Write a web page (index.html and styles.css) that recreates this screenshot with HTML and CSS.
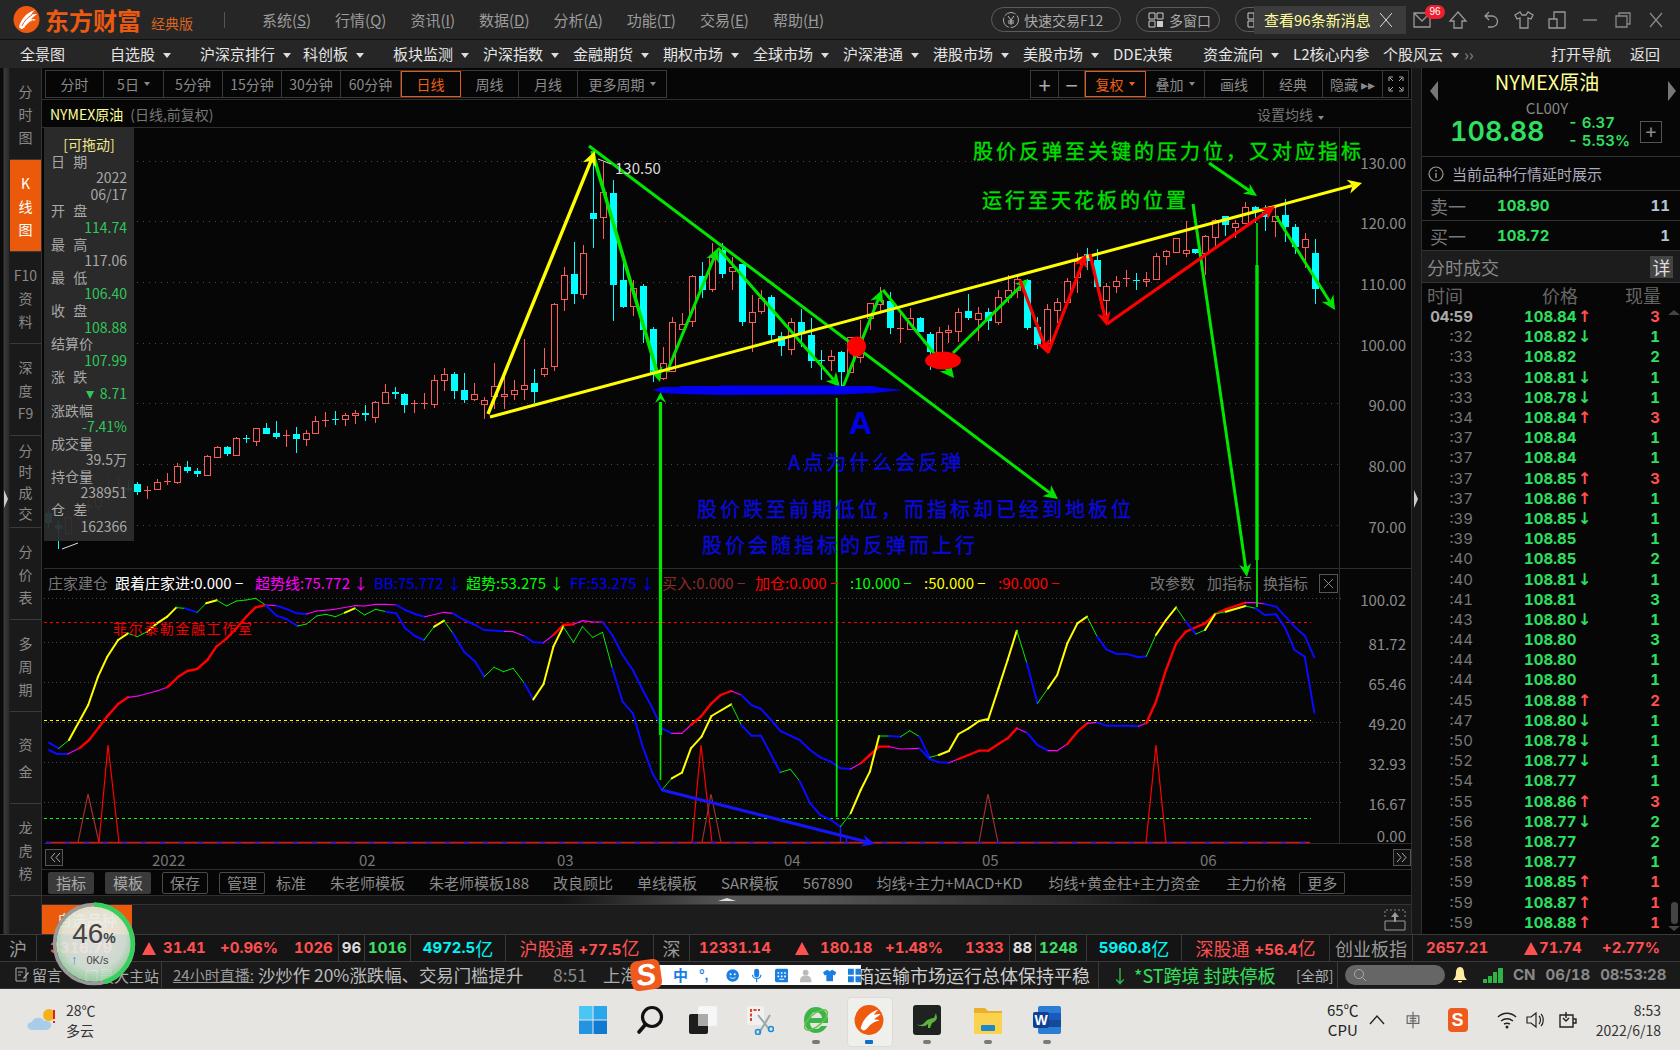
FILE: index.html
```html
<!DOCTYPE html>
<html lang="zh-CN">
<head>
<meta charset="utf-8">
<title>东方财富 经典版</title>
<link rel="stylesheet" href="styles.css">
</head>
<body>
<div class="app">
  <header class="titlebar">
    <div class="brand">
      <svg class="logo" viewBox="0 0 27 27"><ellipse cx="13.5" cy="13.5" rx="13" ry="13.5" fill="#ee5a0f"/><path d="M6 21C8 13 13 7 22 4c-2 2-3 3-4 5 2-1 4-1 6-1-2 2-4 3-6 5 2 0 4 0 5 1-5 1-8 3-11 7-2 2-4 3-6 0z" fill="#fff"/><path d="M9 20c2-5 6-9 10-11M12 21c2-3 5-5 8-7" stroke="#ee5a0f" fill="none"/></svg>
      <span class="brand-name">东方财富</span>
      <span class="brand-sub">经典版</span>
    </div>
    <i class="title-sep"></i>
    <div class="menu">
      <span>系统(<u>S</u>)</span><span>行情(<u>Q</u>)</span><span>资讯(<u>I</u>)</span><span>数据(<u>D</u>)</span><span>分析(<u>A</u>)</span><span>功能(<u>T</u>)</span><span>交易(<u>E</u>)</span><span>帮助(<u>H</u>)</span>
    </div>
    <div class="pills">
      <span class="pill pill-trade"><svg class="pill-ico" viewBox="0 0 18 18"><circle cx="9" cy="9" r="7.5" fill="none" stroke="#aaa" stroke-dasharray="12 2"/><path d="M6 5l3 4 3-4M9 9v5M6 10h6M6 12h6" stroke="#bbb" fill="none"/></svg>快速交易F12</span>
      <span class="pill pill-win"><svg class="pill-ico" viewBox="0 0 18 18"><path d="M2 2h6v6H2zM10 2h6v6h-6zM2 10h6v6H2z" fill="none" stroke="#ccc"/><path d="M10 10h6v6h-6z" fill="#ccc"/></svg>多窗口</span>
      <span class="pill pill-hidden"><svg class="pill-ico" viewBox="0 0 18 18"><path d="M2 2h6v6H2zM2 10h6v6H2z" fill="none" stroke="#ccc"/></svg></span>
    </div>
    <div class="winbtns">
      <span class="slot slot-mail"><svg class="ico" viewBox="0 0 20 20"><path d="M2 3h16v14H2zM2 3l8 8 8-8" fill="none" stroke="#999" stroke-width="1.3"/></svg></span>
      <span class="slot"><svg class="ico" viewBox="0 0 20 20"><path d="M10 2l8 9h-4v7H6v-7H2z" fill="none" stroke="#999" stroke-width="1.3"/></svg></span>
      <span class="slot"><svg class="ico" viewBox="0 0 20 20"><path d="M8 2L4 6l4 4M4 6h7a5 5 0 0 1 0 11H7" fill="none" stroke="#999" stroke-width="1.3"/></svg></span>
      <span class="slot"><svg class="ico" viewBox="0 0 20 20"><path d="M6 2L1 5l2 4 3-1v10h8V8l3 1 2-4-5-3-2 3H8z" fill="none" stroke="#999" stroke-width="1.3"/></svg></span>
      <span class="slot"><svg class="ico" viewBox="0 0 20 20"><path d="M7 9V2h11v16H7M2 9h8v9H2z" fill="none" stroke="#999" stroke-width="1.3"/></svg></span>
      <span class="slot"><svg class="ico" viewBox="0 0 20 20"><path d="M3 10h14" stroke="#888" stroke-width="1.4"/></svg></span>
      <span class="slot"><svg class="ico" viewBox="0 0 20 20"><path d="M3 6h11v11H3zM6 6V3h11v11h-3" fill="none" stroke="#888" stroke-width="1.3"/></svg></span>
      <span class="slot"><svg class="ico" viewBox="0 0 20 20"><path d="M4 3l12 14M16 3L4 17" stroke="#888" stroke-width="1.3"/></svg></span>
    </div>
    <div class="notice">查看96条新消息<svg class="notice-x" viewBox="0 0 14 16"><path d="M1 1l12 14M13 1L1 15" stroke="#ddd" fill="none"/></svg></div>
    <span class="badge">96</span>
  </header>

  <nav class="navbar">
    <span class="nav-item">全景图</span>
    <span class="nav-item caret">自选股</span>
    <span class="nav-item nav-wide caret">沪深京排行</span>
    <span class="nav-item caret">科创板</span>
    <span class="nav-item caret">板块监测</span>
    <span class="nav-item caret">沪深指数</span>
    <span class="nav-item caret">金融期货</span>
    <span class="nav-item caret">期权市场</span>
    <span class="nav-item caret">全球市场</span>
    <span class="nav-item caret">沪深港通</span>
    <span class="nav-item caret">港股市场</span>
    <span class="nav-item caret">美股市场</span>
    <span class="nav-item">DDE决策</span>
    <span class="nav-item caret">资金流向</span>
    <span class="nav-item">L2核心内参</span>
    <span class="nav-item nav-last caret">个股风云</span>
    <span class="nav-more">››</span>
    <span class="nav-right">打开导航</span>
    <span class="nav-right">返回</span>
  </nav>

  <div class="workspace">
    <div class="rail-left"><i class="rail-arrow"></i></div>
    <aside class="tabs">
      <div class="tab"><span>分</span><span>时</span><span>图</span></div>
      <div class="tab tab-on"><span>K</span><span>线</span><span>图</span></div>
      <div class="tab"><span>F10</span><span>资</span><span>料</span></div>
      <div class="tab"><span>深</span><span>度</span><span>F9</span></div>
      <div class="tab tab-tight"><span>分</span><span>时</span><span>成</span><span>交</span></div>
      <div class="tab"><span>分</span><span>价</span><span>表</span></div>
      <div class="tab"><span>多</span><span>周</span><span>期</span></div>
      <div class="tab tab-wide"><span>资</span><span>金</span></div>
      <div class="tab"><span>龙</span><span>虎</span><span>榜</span></div>
    </aside>

    <main class="center">
      <div class="toolbar">
        <div class="periods">
          <span class="btn">分时</span>
          <span class="btn">5日<b class="tri"></b></span>
          <span class="btn">5分钟</span>
          <span class="btn">15分钟</span>
          <span class="btn">30分钟</span>
          <span class="btn">60分钟</span>
          <span class="btn btn-on">日线</span>
          <span class="btn">周线</span>
          <span class="btn">月线</span>
          <span class="btn">更多周期<b class="tri"></b></span>
        </div>
        <div class="tools">
          <span class="btn btn-sym">+</span>
          <span class="btn btn-sym">−</span>
          <span class="btn btn-on">复权<b class="tri tri-on"></b></span>
          <span class="btn">叠加<b class="tri"></b></span>
          <span class="btn">画线</span>
          <span class="btn">经典</span>
          <span class="btn">隐藏 ▸▸</span>
          <span class="btn"><svg class="full-ico" viewBox="0 0 16 16"><path d="M1 5V1h4M11 1h4v4M15 11v4h-4M5 15H1v-4M2 2l3 3M14 2l-3 3M14 14l-3-3M2 14l3-3" fill="none" stroke="#aaa"/></svg></span>
        </div>
      </div>
      <div class="symbol">
        <span class="sym-name">NYMEX原油</span>
        <span class="sym-desc">(日线,前复权)</span>
        <span class="sym-set">设置均线<b class="tri"></b></span>
      </div>

      <div class="stage">
        <svg id="chart" class="chart" viewBox="44 128 1368 741" width="1368" height="741">
          <g id="plot"></g>
          <g class="axis-text">
            <text x="1406" y="169">130.00</text>
            <text x="1406" y="229">120.00</text>
            <text x="1406" y="290">110.00</text>
            <text x="1406" y="351">100.00</text>
            <text x="1406" y="411">90.00</text>
            <text x="1406" y="472">80.00</text>
            <text x="1406" y="533">70.00</text>
            <text x="1406" y="606">100.02</text>
            <text x="1406" y="650">81.72</text>
            <text x="1406" y="690">65.46</text>
            <text x="1406" y="730">49.20</text>
            <text x="1406" y="770">32.93</text>
            <text x="1406" y="810">16.67</text>
            <text x="1406" y="842">0.00</text>
          </g>
          <text class="hi-label" x="615" y="174">130.50</text>
          <g class="note note-green">
            <text x="973" y="159">股价反弹至关键的压力位，又对应指标</text>
            <text x="982" y="208">运行至天花板的位置</text>
          </g>
          <g class="note note-blue">
            <text x="788" y="470">A点为什么会反弹</text>
            <text x="697" y="517">股价跌至前期低位，而指标却已经到地板位</text>
            <text x="702" y="553">股价会随指标的反弹而上行</text>
          </g>
          <text class="big-a" x="849" y="434">A</text>
          <text class="studio" x="113" y="634">菲尔泰勒金融工作室</text>
          <g class="ind-head">
            <text x="48" y="589" fill="#777">庄家建仓</text>
            <text x="115" y="589" fill="#fff">跟着庄家进:0.000 −</text>
            <text x="255" y="589" fill="#ff00ff">超势线:75.772 ↓</text>
            <text x="374" y="589" fill="#0000ff">BB:75.772 ↓</text>
            <text x="466" y="589" fill="#00ff00">超势:53.275 ↓</text>
            <text x="570" y="589" fill="#0000ff">FF:53.275 ↓</text>
            <text x="662" y="589" fill="#8c2a2a">买入:0.000 −</text>
            <text x="755" y="589" fill="#ff0000">加仓:0.000 −</text>
            <text x="850" y="589" fill="#00ff00">:10.000 −</text>
            <text x="924" y="589" fill="#ffff00">:50.000 −</text>
            <text x="998" y="589" fill="#ff0000">:90.000 −</text>
            <text x="1150" y="589" fill="#777">改参数</text>
            <text x="1207" y="589" fill="#777">加指标</text>
            <text x="1263" y="589" fill="#777">换指标</text>
          </g>
          <g class="time-axis">
            <text x="152" y="866" fill="#fff">2022</text>
            <text x="359" y="866">02</text>
            <text x="557" y="866">03</text>
            <text x="784" y="866">04</text>
            <text x="982" y="866">05</text>
            <text x="1200" y="866">06</text>
          </g>
        </svg>
        <div class="datawin">
          <div class="dw-title">[可拖动]</div>
          <div class="dw-label">日 期</div><div class="dw-val">2022</div><div class="dw-val">06/17</div>
          <div class="dw-label">开 盘</div><div class="dw-val dw-g">114.74</div>
          <div class="dw-label">最 高</div><div class="dw-val">117.06</div>
          <div class="dw-label">最 低</div><div class="dw-val dw-g">106.40</div>
          <div class="dw-label">收 盘</div><div class="dw-val dw-g">108.88</div>
          <div class="dw-label">结算价</div><div class="dw-val dw-g">107.99</div>
          <div class="dw-label">涨 跌</div><div class="dw-val dw-g"><span class="dw-tri"></span>8.71</div>
          <div class="dw-label">涨跌幅</div><div class="dw-val dw-g">-7.41%</div>
          <div class="dw-label">成交量</div><div class="dw-val">39.5万</div>
          <div class="dw-label">持仓量</div><div class="dw-val">238951</div>
          <div class="dw-label">仓 差</div><div class="dw-val">162366</div>
        </div>
      </div>

      <div class="templates">
        <span class="tpl tpl-fill">指标</span>
        <span class="tpl tpl-fill">模板</span>
        <span class="tpl tpl-line">保存</span>
        <span class="tpl tpl-line">管理</span>
        <span class="tpl-text">标准</span>
        <span class="tpl-text">朱老师模板</span>
        <span class="tpl-text">朱老师模板188</span>
        <span class="tpl-text">改良顾比</span>
        <span class="tpl-text">单线模板</span>
        <span class="tpl-text">SAR模板</span>
        <span class="tpl-text">567890</span>
        <span class="tpl-text tpl-gap">均线+主力+MACD+KD</span>
        <span class="tpl-text tpl-gap">均线+黄金柱+主力资金</span>
        <span class="tpl-text tpl-end">主力价格</span>
        <span class="tpl tpl-line">更多</span>
      </div>
      <div class="strip"><i class="strip-up"></i></div>
      <div class="dock">
        <span class="dock-tab">自选品种</span>
        <svg class="dock-ico" viewBox="0 0 22 22"><path d="M1 8V1h20v7" fill="none" stroke="#888" stroke-dasharray="2 2"/><path d="M1 12h20v9H1z" fill="none" stroke="#999"/><path d="M11 3l4 5h-3v5h-2V8H7z" fill="#999"/></svg>
      </div>
    </main>

    <div class="rail-right"><i class="rail-arrow rail-arrow-r"></i></div>

    <aside class="quote">
      <div class="q-head">
        <i class="q-prev"></i><i class="q-next"></i>
        <div class="q-name">NYMEX原油</div>
        <div class="q-code">CL00Y</div>
        <div class="q-price-row">
          <span class="q-price">108.88</span>
          <span class="q-chg"><span>- 6.37</span><span>- 5.53%</span></span>
          <span class="q-plus">+</span>
        </div>
      </div>
      <div class="q-delay"><svg class="q-info" viewBox="0 0 16 16"><circle cx="8" cy="8" r="7" fill="none" stroke="#999" stroke-width="1.2"/><path d="M8 4v1.5M8 7v5" stroke="#999" stroke-width="1.4"/></svg>当前品种行情延时展示</div>
      <div class="q-book"><span class="q-side">卖一</span><span class="q-bp">108.90</span><span class="q-bv">11</span></div>
      <div class="q-book"><span class="q-side">买一</span><span class="q-bp">108.72</span><span class="q-bv">1</span></div>
      <div class="q-sec">分时成交<span class="q-detail">详</span></div>
      <div class="q-cols"><span class="c-time-h">时间</span><span class="c-price-h">价格</span><span class="c-vol-h">现量</span></div>
      <div class="trades">
        <div class="tr"><span class="t-time t-first">04:59</span><span class="t-price">108.84</span><span class="t-arr up">↑</span><span class="t-vol red">3</span></div>
        <div class="tr"><span class="t-time">:32</span><span class="t-price">108.82</span><span class="t-arr dn">↓</span><span class="t-vol">1</span></div>
        <div class="tr"><span class="t-time">:33</span><span class="t-price">108.82</span><span class="t-arr"></span><span class="t-vol">2</span></div>
        <div class="tr"><span class="t-time">:33</span><span class="t-price">108.81</span><span class="t-arr dn">↓</span><span class="t-vol">1</span></div>
        <div class="tr"><span class="t-time">:33</span><span class="t-price">108.78</span><span class="t-arr dn">↓</span><span class="t-vol">1</span></div>
        <div class="tr"><span class="t-time">:34</span><span class="t-price">108.84</span><span class="t-arr up">↑</span><span class="t-vol red">3</span></div>
        <div class="tr"><span class="t-time">:37</span><span class="t-price">108.84</span><span class="t-arr"></span><span class="t-vol">1</span></div>
        <div class="tr"><span class="t-time">:37</span><span class="t-price">108.84</span><span class="t-arr"></span><span class="t-vol">1</span></div>
        <div class="tr"><span class="t-time">:37</span><span class="t-price">108.85</span><span class="t-arr up">↑</span><span class="t-vol red">3</span></div>
        <div class="tr"><span class="t-time">:37</span><span class="t-price">108.86</span><span class="t-arr up">↑</span><span class="t-vol">1</span></div>
        <div class="tr"><span class="t-time">:39</span><span class="t-price">108.85</span><span class="t-arr dn">↓</span><span class="t-vol">1</span></div>
        <div class="tr"><span class="t-time">:39</span><span class="t-price">108.85</span><span class="t-arr"></span><span class="t-vol">1</span></div>
        <div class="tr"><span class="t-time">:40</span><span class="t-price">108.85</span><span class="t-arr"></span><span class="t-vol">2</span></div>
        <div class="tr"><span class="t-time">:40</span><span class="t-price">108.81</span><span class="t-arr dn">↓</span><span class="t-vol">1</span></div>
        <div class="tr"><span class="t-time">:41</span><span class="t-price">108.81</span><span class="t-arr"></span><span class="t-vol">3</span></div>
        <div class="tr"><span class="t-time">:43</span><span class="t-price">108.80</span><span class="t-arr dn">↓</span><span class="t-vol">1</span></div>
        <div class="tr"><span class="t-time">:44</span><span class="t-price">108.80</span><span class="t-arr"></span><span class="t-vol">3</span></div>
        <div class="tr"><span class="t-time">:44</span><span class="t-price">108.80</span><span class="t-arr"></span><span class="t-vol">1</span></div>
        <div class="tr"><span class="t-time">:44</span><span class="t-price">108.80</span><span class="t-arr"></span><span class="t-vol">1</span></div>
        <div class="tr"><span class="t-time">:45</span><span class="t-price">108.88</span><span class="t-arr up">↑</span><span class="t-vol red">2</span></div>
        <div class="tr"><span class="t-time">:47</span><span class="t-price">108.80</span><span class="t-arr dn">↓</span><span class="t-vol">1</span></div>
        <div class="tr"><span class="t-time">:50</span><span class="t-price">108.78</span><span class="t-arr dn">↓</span><span class="t-vol">1</span></div>
        <div class="tr"><span class="t-time">:52</span><span class="t-price">108.77</span><span class="t-arr dn">↓</span><span class="t-vol">1</span></div>
        <div class="tr"><span class="t-time">:54</span><span class="t-price">108.77</span><span class="t-arr"></span><span class="t-vol">1</span></div>
        <div class="tr"><span class="t-time">:55</span><span class="t-price">108.86</span><span class="t-arr up">↑</span><span class="t-vol red">3</span></div>
        <div class="tr"><span class="t-time">:56</span><span class="t-price">108.77</span><span class="t-arr dn">↓</span><span class="t-vol">2</span></div>
        <div class="tr"><span class="t-time">:58</span><span class="t-price">108.77</span><span class="t-arr"></span><span class="t-vol">2</span></div>
        <div class="tr"><span class="t-time">:58</span><span class="t-price">108.77</span><span class="t-arr"></span><span class="t-vol">1</span></div>
        <div class="tr"><span class="t-time">:59</span><span class="t-price">108.85</span><span class="t-arr up">↑</span><span class="t-vol red">1</span></div>
        <div class="tr"><span class="t-time">:59</span><span class="t-price">108.87</span><span class="t-arr up">↑</span><span class="t-vol red">1</span></div>
        <div class="tr"><span class="t-time">:59</span><span class="t-price">108.88</span><span class="t-arr up">↑</span><span class="t-vol red">1</span></div>
      </div>
      <div class="scroll"><i class="sc-up"></i><i class="sc-thumb"></i><i class="sc-dn"></i></div>
    </aside>
  </div>

  <div class="stats">
    <span class="s-cell s-ex s-ex-sh">沪</span>
    <span class="s-cell s-quote s-sh">
      <span class="s-p">3316.79</span><i class="s-tri"></i><span class="s-c">31.41</span><span class="s-r">+0.96%</span><span class="s-up">1026</span><span class="s-fl">96</span><span class="s-dn">1016</span>
    </span>
    <span class="s-cell s-amt s-amt-a">4972.5<em>亿</em></span>
    <span class="s-cell s-conn">沪股通 <b>+77.5<em>亿</em></b></span>
    <span class="s-cell s-ex s-ex-sz">深</span>
    <span class="s-cell s-quote s-sz">
      <span class="s-p">12331.14</span><i class="s-tri"></i><span class="s-c">180.18</span><span class="s-r">+1.48%</span><span class="s-up">1333</span><span class="s-fl">88</span><span class="s-dn">1248</span>
    </span>
    <span class="s-cell s-amt s-amt-b">5960.8<em>亿</em></span>
    <span class="s-cell s-conn">深股通 <b>+56.4<em>亿</em></b></span>
    <span class="s-cell s-gem-name">创业板指</span>
    <span class="s-cell s-gem">
      <span class="s-p">2657.21</span><i class="s-tri"></i><span class="s-c">71.74</span><span class="s-r">+2.77%</span>
    </span>
  </div>

  <div class="ticker">
    <span class="tk-msg"><svg class="tk-ico" viewBox="0 0 16 16"><path d="M2 1h10v13H2zM4 5h5M4 8h3" fill="none" stroke="#aaa"/><path d="M9 11l5-6 1 1-5 6z" fill="#aaa"/></svg>留言</span>
    <span class="tk-site">门最大主站</span>
    <span class="tk-live"><u>24小时直播:</u></span>
    <span class="tk-news">沙炒作 20%涨跌幅、交易门槛提升</span>
    <span class="tk-time">8:51</span>
    <span class="tk-sh">上海</span>
    <span class="tk-news2">箱运输市场运行总体保持平稳</span>
    <span class="tk-down">↓</span>
    <span class="tk-st">*ST跨境 封跌停板</span>
    <span class="tk-all">[全部]</span>
    <span class="tk-search"><svg class="tk-mag" viewBox="0 0 14 14"><circle cx="6" cy="6" r="4.5" fill="none" stroke="#aaa"/><path d="M9.5 9.5L13 13" stroke="#aaa"/></svg></span>
    <svg class="tk-bell" viewBox="0 0 16 18"><path d="M8 1c3 0 4 3 4 6 0 4 2 6 3 7H1c1-1 3-3 3-7 0-3 1-6 4-6zM6 15h4c0 2-4 2-4 0z" fill="#ffeca0"/></svg>
    <svg class="tk-sig" viewBox="0 0 20 16"><path d="M0 12h4v4H0zM5 9h4v7H5zM10 5h4v11h-4zM15 1h5v15h-5z" fill="#2fb344"/></svg>
    <span class="tk-stat">CN</span>
    <span class="tk-stat tk-date">06/18</span>
    <span class="tk-stat tk-clock">08:53:28</span>
  </div>

  <footer class="taskbar">
    <div class="weather">
      <svg class="wx" viewBox="0 0 30 28"><circle cx="22" cy="9" r="6" fill="#f6b21b"/><path d="M5 24c-6 0-6-8 0-8 1-5 10-6 12-1 5-1 8 2 7 5-1 3-3 4-6 4z" fill="#a9cde8"/><path d="M26 4h2v9h-2zM26 15h2v2h-2z" fill="#e02020"/></svg>
      <div class="wx-text"><span>28℃</span><span>多云</span></div>
    </div>
    <div class="apps">
      <span class="app-slot w57"><svg class="app-ico" viewBox="0 0 30 30"><path d="M1 1h13.5v13.5H1z" fill="#49c6f3"/><path d="M15.5 1H29v13.5H15.5z" fill="#2ba6ea"/><path d="M1 15.5h13.5V29H1z" fill="#2493e2"/><path d="M15.5 15.5H29V29H15.5z" fill="#0f7ad0"/></svg></span>
      <span class="app-slot w53"><svg class="app-ico" viewBox="0 0 30 30"><circle cx="17" cy="12" r="9.5" fill="none" stroke="#111" stroke-width="3.2"/><path d="M10 20l-6 7" stroke="#111" stroke-width="3.6" stroke-linecap="round"/></svg></span>
      <span class="app-slot w56"><svg class="app-ico" viewBox="0 0 30 30"><rect x="10" y="1" width="19" height="20" rx="2" fill="#f6f6f6"/><rect x="1" y="9" width="19" height="20" rx="2" fill="#1d1d1d"/><rect x="10" y="9" width="10" height="12" fill="#aaa"/></svg></span>
      <span class="app-slot w57"><svg class="app-ico" viewBox="0 0 30 30"><rect x="3" y="1" width="17" height="19" rx="2" fill="#f1f1f1"/><path d="M7 16V5h9" fill="none" stroke="#d9442b" stroke-width="2" stroke-dasharray="3 1.5"/><path d="M14 10l11 14M26 10L15 28" stroke="#9aa" stroke-width="2"/><circle cx="27" cy="24" r="2.5" fill="none" stroke="#1f8fdc" stroke-width="1.6"/><circle cx="14" cy="27" r="2.5" fill="none" stroke="#1f8fdc" stroke-width="1.6"/></svg></span>
      <span class="app-slot w53"><svg class="app-ico" viewBox="0 0 30 30"><path d="M15 2C8 2 3 8 3 15s5 13 12 13c5 0 9-3 11-7h-6c-1 2-3 3-5 3-4 0-6-3-6-6h18v-3C27 8 22 2 15 2zm-6 11c0-3 3-6 6-6s6 3 6 6z" fill="#3bb54a"/><ellipse cx="15" cy="15" rx="14" ry="6" transform="rotate(-40 15 15)" fill="none" stroke="#6ac24a" stroke-width="1.5"/></svg></span>
      <span class="app-slot app-active w58"><svg class="app-ico" viewBox="0 0 27 27"><ellipse cx="13.5" cy="13.5" rx="13" ry="13.5" fill="#ee5a0f"/><path d="M6 21C8 13 13 7 22 4c-2 2-3 3-4 5 2-1 4-1 6-1-2 2-4 3-6 5 2 0 4 0 5 1-5 1-8 3-11 7-2 2-4 3-6 0z" fill="#fff"/></svg></span>
      <span class="app-slot w61"><svg class="app-ico" viewBox="0 0 30 30"><rect x="1" y="0" width="28" height="30" rx="3" fill="#1e2220"/><path d="M4 19c4 2 7 1 9-2 3-3 6-4 9-4l2-5 1 5c-1 3-3 4-5 5l-2 5h-2v-4c-3 3-7 3-12 0z" fill="#5bb33a"/></svg></span>
      <span class="app-slot w59"><svg class="app-ico" viewBox="0 0 30 30"><path d="M1 3h11l3 3h14v23H1z" fill="#e9b02b"/><path d="M1 8h28v21H1z" fill="#fbd24e"/><rect x="8" y="20" width="14" height="6" rx="1" fill="#1d87c8"/></svg></span>
      <span class="app-slot"><svg class="app-ico" viewBox="0 0 30 30"><rect x="6" y="1" width="23" height="28" rx="2" fill="#2b7cd3"/><rect x="6" y="8" width="23" height="7" fill="#185abd"/><rect x="6" y="15" width="23" height="7" fill="#15499c"/><rect x="1" y="7" width="16" height="16" rx="2" fill="#103f91"/><text class="word-w" x="9" y="20">W</text></svg></span>
    </div>
    <div class="tray">
      <div class="tray-cpu"><span>65℃</span><span>CPU</span></div>
      <svg class="tray-ico ml8" viewBox="0 0 20 20"><path d="M3 14l7-8 7 8" fill="none" stroke="#222" stroke-width="1.3"/></svg>
      <svg class="tray-ico ml16" viewBox="0 0 20 24"><path d="M3 7h14v9H3zM10 2v20M6 10h8M6 13h8" fill="none" stroke="#666" stroke-width="1.4"/></svg>
      <span class="sogou-mini">S</span>
      <svg class="tray-ico ml29" viewBox="0 0 20 20"><path d="M1 7c5-5 13-5 18 0M4 11c4-3 8-3 12 0M7 14c2-1 4-1 6 0" fill="none" stroke="#222" stroke-width="1.5"/><circle cx="10" cy="17" r="1.5" fill="#222"/></svg>
      <svg class="tray-ico ml8" viewBox="0 0 20 20"><path d="M2 7h4l5-4v14l-5-4H2zM14 6c2 2 2 6 0 8M16 4c3 3 3 9 0 12" fill="none" stroke="#222" stroke-width="1.2"/></svg>
      <svg class="tray-ico ml13" viewBox="0 0 20 20"><path d="M2 5h13v12H2zM15 9h3v4h-3zM8 2v6M5 8l3 3 3-3" fill="none" stroke="#222" stroke-width="1.4"/></svg>
      <div class="tray-clock"><span>8:53</span><span>2022/6/18</span></div>
    </div>
  </footer>

  <div class="speedball">
    <svg class="ball-svg" viewBox="0 0 84 84">
      <defs><radialGradient id="ballFill" cx="50%" cy="42%" r="55%"><stop offset="0" stop-color="#f4f4f4"/><stop offset=".75" stop-color="#e2eee2"/><stop offset="1" stop-color="#a9e0b2"/></radialGradient></defs>
      <circle cx="42" cy="42" r="38" fill="url(#ballFill)" fill-opacity=".9"/>
      <circle cx="42" cy="42" r="39.5" fill="none" stroke="#9a9a9a" stroke-width="3.5"/>
      <path d="M42 2.5A39.5 39.5 0 0 1 52 80" fill="none" stroke="#36d05c" stroke-width="4.5"/>
    </svg>
    <span class="ball-pct">46<small>%</small></span>
    <span class="ball-net"><b>↑</b>0K/s</span>
  </div>

  <div class="ime">
    <span class="ime-s">S</span>
    <div class="ime-bar">
      <span class="ime-zh">中</span>
      <span class="ime-p">°,</span>
      <svg class="ime-ico" viewBox="0 0 16 16"><circle cx="8" cy="8" r="7.5" fill="#1b7fe0"/><circle cx="5.5" cy="6.5" r="1.2" fill="#fff"/><circle cx="10.5" cy="6.5" r="1.2" fill="#fff"/><path d="M4.5 10c2 2 5 2 7 0" stroke="#fff" fill="none"/></svg>
      <svg class="ime-ico" viewBox="0 0 16 16"><rect x="5" y="0" width="6" height="10" rx="3" fill="#1b7fe0"/><path d="M3 7c0 6 10 6 10 0M8 12v4" stroke="#1b7fe0" fill="none" stroke-width="1.4"/></svg>
      <svg class="ime-ico" viewBox="0 0 16 16"><rect width="16" height="16" rx="2" fill="#1b7fe0"/><path d="M3 4h2v2H3zM7 4h2v2H7zM11 4h2v2h-2zM3 8h2v2H3zM7 8h2v2H7zM11 8h2v2h-2zM5 12h6v1H5z" fill="#fff"/></svg>
      <svg class="ime-ico" viewBox="0 0 16 16"><circle cx="8" cy="4.5" r="3.5" fill="#bbb"/><path d="M1 16c0-6 3-8 7-8s7 2 7 8z" fill="#bbb"/></svg>
      <svg class="ime-ico" viewBox="0 0 16 16"><path d="M5 1L0 4l2 4 2-1v8h8V7l2 1 2-4-5-3-3 2z" fill="#1b7fe0"/></svg>
      <svg class="ime-ico" viewBox="0 0 16 16"><path d="M0 0h7v7H0zM9 0h7v7H9zM0 9h7v7H0zM9 9h7v7H9z" fill="#1b7fe0"/></svg>
    </div>
  </div>
</div>
<script src="chart.js"></script>
</body>
</html>
```

FILE: styles.css
```css
*{box-sizing:border-box;margin:0;padding:0}
html,body{width:1680px;height:1050px;overflow:hidden;background:#000}
body{font-family:"Noto Sans CJK SC","Liberation Sans",sans-serif;font-size:14px;color:#999}
svg{display:block}
em{font-style:normal}
.app{position:relative;width:1680px;height:1050px;overflow:hidden;display:flex;flex-direction:column;background:#111}

/* title bar */
.titlebar{position:relative;height:40px;flex:none;display:flex;align-items:center;background:#262626;border-bottom:1px solid #111}
.brand{display:flex;align-items:center;margin-left:13px;width:211px}
.logo{width:27px;height:27px;flex:none}
.brand-name{margin-left:5px;font-size:24px;font-weight:700;color:#ea5a12;line-height:30px}
.brand-sub{margin-left:10px;font-size:14px;color:#d9651f;line-height:20px;margin-top:6px}
.title-sep{width:1px;height:16px;background:#555;flex:none}
.menu{display:flex;gap:24px;margin-left:37px;font-size:15px;color:#9c9c9c;line-height:20px}
.pills{display:flex;gap:15px;margin-left:auto}
.pill{display:flex;align-items:center;height:25px;border:1px solid #5c5c5c;border-radius:13px;font-size:14px;color:#aaa;padding-left:10px}
.pill-trade{width:130px}
.pill-win{width:84px}
.pill-hidden{width:151px}
.pill-ico{width:18px;height:18px;margin-right:4px;flex:none}
.winbtns{display:flex;margin:0 8px 0 16px}
.slot{width:33px;height:24px;display:flex;align-items:center;justify-content:center}
.slot-mail{width:39px}
.ico{width:20px;height:20px}
.notice{position:absolute;left:1254px;top:6px;width:152px;height:28px;background:#3c3c3c;color:#ffff9a;font-size:15px;line-height:28px;padding-left:10px;display:flex;align-items:center;gap:8px}
.notice-x{width:14px;height:16px}
.badge{position:absolute;left:1425px;top:5px;width:20px;height:14px;border-radius:7px;background:#f01f2f;color:#fff;font:10px/14px "Liberation Sans",sans-serif;text-align:center}

/* nav */
.navbar{height:28px;flex:none;display:flex;align-items:center;padding-left:20px;background:#262626;font-size:15px;color:#e4e4e4;line-height:20px}
.nav-item{width:90px;flex:none;white-space:nowrap}
.nav-wide{width:103px}
.nav-last{width:81px}
.caret::after{content:"";display:inline-block;margin-left:8px;vertical-align:2px;border:4px solid transparent;border-top:5px solid #ddd;border-bottom:0}
.nav-more{color:#888;font-size:16px;width:87px;flex:none}
.nav-right{width:79px;flex:none}
.nav-right:last-child{width:auto}

/* workspace */
.workspace{height:866px;flex:none;display:flex;background:#060606}
.rail-left{width:10px;flex:none;position:relative;background:linear-gradient(90deg,#0b0b0b 0,#0b0b0b 30%,#3a3a3a 40%,#2a2a2a 90%,#111 100%)}
.rail-arrow{position:absolute;left:4px;top:422px;width:0;height:0;border:5px solid transparent;border-left:4px solid #ccc;border-right:0;border-top-width:9px;border-bottom-width:9px}
.rail-arrow-r{left:2px}
.tabs{width:32px;flex:none;display:flex;flex-direction:column;background:#1a1a1a;border-right:1px solid #333}
.tab{height:92px;display:flex;flex-direction:column;align-items:center;justify-content:center;gap:7px;border-bottom:1px solid #3a3a3a;color:#888;font-size:14px;line-height:16px}
.tab-tight{gap:5px}
.tab-wide{gap:11px}
.tab-on{background:#ea5a0a;color:#fff}
.center{width:1370px;flex:none;display:flex;flex-direction:column;padding-left:0;background:#060606;border-right:1px solid #2e2e2e}
.toolbar{height:32px;flex:none;display:flex;justify-content:space-between;padding:2px 2px 0 3px;border-bottom:1px solid #2e2e2e}
.periods,.tools{display:grid;height:28px;border:1px solid #3a3a3a;border-right:0}
.periods{grid-template-columns:58px 60px 59px 59px 59px 60px 60px 58px 59px 89px}
.tools{grid-template-columns:28px 26px 61px 59px 59px 59px 60px 26px}
.btn{display:flex;align-items:center;justify-content:center;border-right:1px solid #3a3a3a;font-size:14px;color:#8a8a8a;white-space:nowrap;line-height:18px}
.btn-sym{font-size:22px;color:#aaa}
.btn-on{outline:1px solid #e85a12;outline-offset:-1px;color:#ee5f16}
.tri{display:inline-block;margin-left:5px;border:3.5px solid transparent;border-top:4px solid #888;border-bottom:0}
.tri-on{border-top-color:#ee5f16}
.full-ico{width:16px;height:16px}
.symbol{height:28px;flex:none;display:flex;align-items:center;padding-left:8px;border-bottom:1px solid #2e2e2e;line-height:20px}
.sym-name{color:#ffff99;font-size:14px}
.sym-desc{margin-left:7px;color:#777;font-size:14px}
.sym-set{margin-left:auto;margin-right:87px;color:#777;font-size:14px}

.stage{position:relative;height:741px;flex:none}
.chart{position:absolute;left:2px;top:0}
.axis-text text{fill:#8a8a8a;font-size:15px;text-anchor:end}
.hi-label{fill:#dcdcdc;font-size:15px}
.note text{font-size:20px;letter-spacing:3px;stroke-width:.35px}
.note-green text{fill:#00e000;stroke:#00e000}
.note-blue text{fill:#0a0ad8;stroke:#0a0ad8}
.big-a{fill:#0000e6;font:700 32px "Liberation Sans",sans-serif}
.studio{fill:#f00000;font-size:14px;letter-spacing:1.6px}
.ind-head text{font-size:15px}
.time-axis text{fill:#777;font-size:15px}
.datawin{position:absolute;left:2px;top:0;width:90px;height:413px;padding:8px 7px 0;background:rgba(45,45,45,.94);font-size:14px;line-height:16.6px;color:#a8a8a8}
.dw-title{text-align:center;color:#f0e68c;margin:0 -7px}
.dw-label{word-spacing:5px;white-space:nowrap}
.dw-val{text-align:right;white-space:nowrap}
.dw-g{color:#2fc75a}
.dw-tri{display:inline-block;margin-right:6px;border:4px solid transparent;border-top:8px solid #2fc75a;border-bottom:0}

.templates{height:27px;flex:none;display:flex;align-items:center;padding-left:6px;border-top:1px solid #2e2e2e;border-bottom:1px solid #2e2e2e;font-size:15px;color:#8a8a8a;line-height:20px}
.tpl{width:46px;height:22px;margin-right:11px;border-radius:2px;display:flex;align-items:center;justify-content:center;font-size:15px}
.tpl-fill{background:#3a3a3a;color:#aaa}
.tpl-line{border:1px solid #4a4a4a}
.tpl-text{margin-right:24px;white-space:nowrap}
.tpl-gap{margin-right:26px}
.tpl-end{margin-right:13px}
.strip{height:9px;flex:none;background:linear-gradient(90deg,#151515 0,#151515 38%,#555 50%,#555 56%,#2a2a2a 75%,#151515 82%);border-bottom:1px solid #333;position:relative;display:flex;justify-content:center}
.strip-up{margin:2px 0 0 1px;position:relative;left:0;border:9px solid transparent;border-bottom:3px solid #ddd;border-top:0;height:0;width:0}
.dock{height:29px;flex:none;display:flex;align-items:stretch;justify-content:space-between;background:#1c1c1c;padding-right:5px}
.dock-tab{width:90px;background:#ea5a0a;color:#eee;font-size:15px;line-height:29px;text-align:center}
.dock-ico{width:22px;height:22px;align-self:center}
.rail-right{width:10px;flex:none;position:relative;background:#171717;border-right:1px solid #2e2e2e}

/* quote panel */
.quote{width:258px;flex:none;position:relative;display:flex;flex-direction:column;background:#060606;color:#888}
.q-head{height:89px;flex:none;position:relative;border-bottom:1px solid #333;display:flex;flex-direction:column;align-items:center}
.q-prev,.q-next{position:absolute;top:13px;width:0;height:0;border:7px solid transparent;border-top-width:10px;border-bottom-width:10px}
.q-prev{left:8px;border-right:8px solid #777;border-left:0}
.q-next{right:4px;border-left:8px solid #777;border-right:0}
.q-name{font-size:20px;line-height:28px;color:#ffff99;margin-left:-8px}
.q-code{font-size:15px;line-height:20px;color:#888;margin:2px 0 0 -8px}
.q-price-row{display:flex;align-self:stretch;align-items:center;padding-left:28px;color:#2fe060;font-family:Inter,"Liberation Sans",sans-serif;font-variant-numeric:tabular-nums;margin-top:-4px}
.q-price{font-size:27px;font-weight:600;width:118px;line-height:36px}
.q-chg{display:flex;flex-direction:column;font-size:15px;font-weight:600;line-height:18px;width:72px;white-space:nowrap}
.q-plus{width:22px;height:22px;border:1px solid #555;color:#888;font-size:20px;line-height:18px;text-align:center;font-weight:400}
.q-delay{height:34px;flex:none;display:flex;align-items:center;padding-left:6px;border-bottom:1px solid #333;font-size:15px;color:#aab;line-height:20px;gap:8px}
.q-info{width:16px;height:16px}
.q-book{height:30px;flex:none;display:flex;align-items:center;padding-left:8px;border-bottom:1px solid #333;font-variant-numeric:tabular-nums}
.q-side{width:67px;font-size:18px;color:#777;line-height:24px}
.q-bp{width:120px;font:700 15px Inter,sans-serif;color:#2fe060;font-variant-numeric:tabular-nums}
.q-bv{width:53px;text-align:right;font:700 15px Inter,sans-serif;color:#b6c6d6;font-variant-numeric:tabular-nums}
.q-sec{height:32px;flex:none;display:flex;align-items:center;justify-content:space-between;padding:0 7px 0 5px;background:#1c1c1c;border-bottom:1px solid #333;font-size:18px;line-height:24px;color:#888}
.q-detail{width:23px;height:22px;background:#444;color:#ddd;text-align:center;line-height:22px}
.q-cols{height:24px;flex:none;display:flex;font-size:18px;line-height:24px;color:#666}
.c-time-h{margin-left:5px;width:115px}
.c-price-h{width:83px}
.c-vol-h{width:40px}
.trades{display:flex;flex-direction:column;margin-top:0}
.tr{height:20.2px;display:flex;align-items:center;font:700 15px/20px Inter,"Liberation Sans",sans-serif;color:#2fe060;font-variant-numeric:tabular-nums}
.t-time{width:51px;text-align:right;font-weight:400;color:#777}
.t-first{font-weight:700;color:#aaa}
.t-price{margin-left:51px;width:53px}
.t-arr{width:15px;text-align:center;font:700 16px/20px "DejaVu Sans",sans-serif}
.t-arr.up{color:#ff5050}
.t-vol{width:69px;padding-right:0;text-align:right;padding-left:0;margin-left:-1px}
.t-vol.red{color:#ff5050}
.scroll{position:absolute;right:2px;top:242px;bottom:0;width:8px;display:flex;flex-direction:column;align-items:center}
.sc-up{border:6px solid transparent;border-bottom:5px solid #444;border-top:0}
.sc-thumb{margin-top:auto;width:7px;height:22px;border-radius:4px;background:#444}
.sc-dn{margin:2px 0 3px;border:6px solid transparent;border-top:5px solid #444;border-bottom:0}

/* stats */
.stats{height:27px;flex:none;display:grid;grid-template-columns:37px 374px 95px 148px 36px 397px 95px 148px 83px 267px;background:#141414;border-top:1px solid #3a3a3a;font:700 15px/26px Inter,"Liberation Sans",sans-serif;font-variant-numeric:tabular-nums;color:#ff5050;white-space:nowrap}
.s-cell{display:flex;align-items:center;border-right:1px solid #3a3a3a;overflow:hidden}
.s-ex{font:400 18px/26px "Noto Sans CJK SC",sans-serif;color:#999;justify-content:center}
.s-p{color:#ff5050}
.s-tri{width:0;height:0;flex:none;border:7px solid transparent;border-bottom:13px solid #ff5050;border-top:0;margin-right:7px}
.s-quote .s-up{width:44px}
.s-fl{width:27px;text-align:center;color:#ddd;border-left:1px solid #3a3a3a;border-right:1px solid #3a3a3a}
.s-dn{margin-left:3px;color:#3ee06a}
.s-sh{padding-left:13px}
.s-sh .s-p{width:92px}
.s-sh .s-c{width:57px}
.s-sh .s-r{width:74px}
.s-sz{padding-left:9px}
.s-sz .s-p{width:96px}
.s-sz .s-tri{margin-right:11px}
.s-sz .s-c{width:65px}
.s-sz .s-r{width:80px}
.s-amt{justify-content:center;color:#00f5f5}
.s-amt em,.s-conn em{font:400 18px/26px "Noto Sans CJK SC",sans-serif}
.s-conn{justify-content:center;font:400 18px/26px "Noto Sans CJK SC",sans-serif;color:#ff5050;gap:5px}
.s-conn b{font:700 15px/26px Inter,sans-serif;font-variant-numeric:tabular-nums}
.s-gem-name{justify-content:center;font:400 18px/26px "Noto Sans CJK SC",sans-serif;color:#999}
.s-gem{border-right:0;padding-left:13px}
.s-gem .s-p{width:98px}
.s-gem .s-tri{margin-right:1px}
.s-gem .s-c{width:63px}

/* ticker */
.ticker{height:28px;flex:none;display:flex;align-items:center;background:#1a1a1a;border-top:1px solid #3a3a3a;border-bottom:1px solid #333;font-size:17.4px;line-height:24px;color:#999;white-space:nowrap}
.tk-msg{display:flex;align-items:center;width:84px;padding-left:14px;font-size:15px;color:#aaa;gap:2px}
.tk-ico{width:16px;height:16px}
.tk-site{width:78px;height:100%;font-size:15px;color:#aaa;border-right:1px solid #3a3a3a;line-height:27px}
.tk-live{margin-left:11px;font-size:15px;width:85px}
.tk-news{width:295px;color:#bbb}
.tk-time{width:50px;color:#888}
.tk-sh{width:253px;color:#aaa}
.tk-news2{width:242px;color:#ccc;font-size:18px}
.tk-down{height:100%;width:36px;padding-left:12px;border-left:1px solid #3a3a3a;color:#2fc04a;font-size:18px;line-height:27px}
.tk-st{width:162px;color:#35e05a;font-size:18px}
.tk-all{width:42px;color:#aaa;font-size:14px;height:100%;border-right:1px solid #3a3a3a;line-height:27px}
.tk-search{margin-left:7px;width:100px;height:20px;border-radius:10px;background:#666;display:flex;align-items:center;padding-left:8px}
.tk-mag{width:14px;height:14px}
.tk-bell{width:16px;height:18px;margin-left:7px}
.tk-sig{width:20px;height:16px;margin-left:15px}
.tk-stat{font:700 15px/24px Inter,sans-serif;font-variant-numeric:tabular-nums;color:#888;margin-left:10px}
.tk-date{margin-left:10px}
.tk-clock{margin-left:10px}

/* taskbar */
.taskbar{height:61px;flex:none;display:grid;grid-template-columns:578px auto 1fr;align-items:center;background:#e6e5e1;color:#333}
.weather{display:flex;align-items:center;padding-left:27px;gap:9px;font-size:14px;line-height:20px}
.wx{width:30px;height:28px}
.wx-text,.tray-cpu,.tray-clock{display:flex;flex-direction:column}
.apps{display:flex;align-items:center}
.app-slot{width:60px;display:flex;position:relative}
.w53{width:53px}.w56{width:56px}.w57{width:57px}.w58{width:58px}.w59{width:59px}.w61{width:61px}
.app-ico{width:30px;height:30px}
.app-active::before{content:"";position:absolute;left:-7px;top:-8px;width:44px;height:48px;border-radius:4px;background:#efefec;border:1px solid #dcdbd7}
.app-active .app-ico{position:relative}
.app-active::after{content:"";position:absolute;left:11px;top:35px;width:8px;height:4px;background:#1070c8;border-radius:1px}
.app-slot:nth-child(n+5):not(.app-active)::after{content:"";position:absolute;left:11px;top:35px;width:8px;height:4px;background:#7a7a7a;border-radius:2px}
.word-w{fill:#fff;font:700 14px "Liberation Sans",sans-serif;text-anchor:middle}
.tray{display:flex;align-items:center;justify-content:flex-end;padding-right:19px}
.tray-cpu{font-size:15px;line-height:20px;color:#222;align-items:center}
.tray-ico{width:20px;height:20px}
.ml8{margin-left:8px}.ml13{margin-left:13px}.ml16{margin-left:16px}.ml29{margin-left:29px}
.sogou-mini{width:20px;height:24px;margin-left:25px;border-radius:4px;background:#ef5a1e;color:#fff;font:700 18px/24px "Liberation Sans",sans-serif;text-align:center}
.tray-clock{margin-left:18px;font-size:14px;line-height:20px;color:#333;align-items:flex-end}

/* floating */
.speedball{position:absolute;left:52px;top:902px;width:84px;height:84px}
.ball-svg{width:84px;height:84px}
.ball-pct{position:absolute;left:0;right:0;top:15px;text-align:center;color:#444;font:400 28px/34px "Liberation Sans",sans-serif}
.ball-pct small{font-size:14px;font-weight:700}
.ball-net{position:absolute;left:19px;top:51px;color:#444;font:11px/14px "Liberation Sans",sans-serif}
.ball-net b{color:#2b8ae0;margin-right:9px;font-size:13px}
.ime{position:absolute;left:631px;top:960px;display:flex}
.ime-s{position:relative;z-index:1;width:30px;height:30px;border-radius:7px;background:#ef5a1e;color:#fff;font:italic 700 30px/30px "Liberation Sans",sans-serif;text-align:center;transform:rotate(-8deg)}
.ime-bar{width:204px;height:20px;margin:5px 0 0 -4px;background:#fff;display:flex;align-items:center;padding-left:16px;gap:11px}
.ime-zh{font-size:15px;font-weight:700;color:#1b7fe0;line-height:20px}
.ime-p{font:700 14px/20px "Liberation Sans",sans-serif;color:#1b7fe0;width:18px}
.ime-ico{width:15px;height:15px}
```

FILE: chart.js
```js
(function () {
  var NS = 'http://www.w3.org/2000/svg';
  var plot = document.getElementById('plot');
  function el(name, attrs) {
    var n = document.createElementNS(NS, name);
    for (var k in attrs) n.setAttribute(k, attrs[k]);
    plot.appendChild(n);
    return n;
  }
  function line(x1, y1, x2, y2, c, w, extra) {
    var a = { x1: x1, y1: y1, x2: x2, y2: y2, stroke: c, 'stroke-width': w };
    if (extra) for (var k in extra) a[k] = extra[k];
    return el('line', a);
  }
  function arrow(x1, y1, x2, y2, c, w, len, half) {
    var d = Math.hypot(x2 - x1, y2 - y1), ux = (x2 - x1) / d, uy = (y2 - y1) / d;
    line(x1, y1, x2 - ux * len * .7, y2 - uy * len * .7, c, w);
    var bx = x2 - ux * len, by = y2 - uy * len;
    el('polygon', {
      fill: c,
      points: x2 + ',' + y2 + ' ' + (bx - uy * half) + ',' + (by + ux * half) + ' ' +
        (x2 - ux * len * .7) + ',' + (y2 - uy * len * .7) + ' ' + (bx + uy * half) + ',' + (by - ux * half)
    });
  }

  /* grid */
  [161.5, 221.5, 282.5, 343.5, 403.5, 464.5, 525.5].forEach(function (y) {
    line(137, y, 1343, y, '#4a4a4a', 1, { 'stroke-dasharray': '1 5' });
  });
  [598.5, 642.5, 682.5, 722.5, 762.5, 802.5].forEach(function (y) {
    line(44, y, 1343, y, '#4a4a4a', 1, { 'stroke-dasharray': '1 3' });
  });
  line(44, 568.5, 1412, 568.5, '#2e2e2e', 1);
  line(44, 843.5, 1412, 843.5, '#2e2e2e', 1);
  line(1339.5, 128, 1339.5, 843, '#2e2e2e', 1);
  line(1411.5, 128, 1411.5, 869, '#2e2e2e', 1);

  /* candles: [type, x, wick top, body top, body bottom, wick bottom] */
  var UP = '#ff5a5a', DN = '#00ffff';
  function candle(t, x, wt, bt, bb, wb) {
    var c = t === 'r' ? UP : DN, px = Math.round(x) + .5;
    var g = { 'shape-rendering': 'crispEdges' };
    wt = Math.round(wt); bt = Math.round(bt); bb = Math.round(bb); wb = Math.round(wb);
    line(px, wt, px, bt, c, 1, g);
    line(px, bb, px, wb, c, 1, g);
    if (bb - bt < 2) {
      line(px - 3.5, bt + .5, px + 3.5, bt + .5, c, 1.6, g);
    } else if (t === 'r') {
      el('rect', { x: px - 3, y: bt + .5, width: 6, height: bb - bt, fill: '#060606', stroke: c, 'shape-rendering': 'crispEdges' });
    } else {
      el('rect', { x: px - 3.5, y: bt, width: 7, height: bb - bt, fill: c, 'shape-rendering': 'crispEdges' });
    }
  }
  function series(rows, ox, oy, s) {
    rows.forEach(function (r) {
      candle(r[0], ox + r[1] / s, oy + r[2] / s, oy + r[3] / s, oy + r[4] / s, oy + r[5] / s);
    });
  }
  series([['c',48,510,513,523,528],['c',58,520,525,529,549],['r',68,515,517,533,535],['r',78,505,510,512,520],['r',88,500,505,507,512],['r',98,495,497,506,510],['r',108,478,490,492,500],['r',118,476,488,490,495],['c',128,480,488,490,492]], 0, 0, 1);
  series([
    ['c',112,427,432,456,464],['r',142,438,449,451,476],['r',172,418,425,446,449],['r',202,400,423,425,436],['r',232,370,379,425,431],
    ['c',262,363,381,393,399],['c',292,385,393,401,411],['r',322,345,349,404,405],['r',352,317,322,350,351],['c',380,319,321,342,349],
    ['r',409,292,295,344,345],['c',439,284,295,297,309],['r',469,264,265,304,318],['c',499,250,264,282,282],['c',529,243,279,290,296],
    ['r',559,270,286,289,320],['c',589,262,282,297,339],['r',619,270,280,298,318],['r',646,228,244,278,281],['r',676,216,241,244,261],
    ['c',706,213,238,240,255],['r',736,220,226,238,258],['r',766,210,220,226,252],['c',796,195,220,224,243],['r',826,183,187,230,249],
    ['r',856,132,157,188,190],['c',886,141,156,161,177],['c',913,160,163,194,219],['r',943,180,189,192,219],['r',973,160,189,191,207],
    ['r',1003,106,121,191,204]
  ], 100, 340, 3);
  series([
    ['r',13,715,733,751,782],['c',43,727,733,782,806],['c',73,730,781,809,819],['r',103,759,791,806,813],['r',133,800,811,821,866],
    ['r',161,700,769,797,836],['r',191,742,793,797,837],['r',221,750,781,791,810],['r',251,628,766,776,810],['c',281,717,760,786,820],
    ['r',311,655,715,731,740],['r',341,518,523,709,722],['r',371,412,434,508,543],['c',401,336,433,491,522],['r',428,346,368,493,507],
    ['c',458,90,250,266,353],['r',488,95,187,262,326],['c',518,151,190,464,572],['c',548,390,451,530,533],['r',578,450,475,529,557],
    ['c',608,462,468,600,640],['c',638,590,598,730,755],['r',668,652,700,745,750],['r',695,562,575,723,725],['r',725,550,581,598,594],
    ['r',755,436,439,574,590],['c',785,396,438,479,505],['r',815,340,380,478,486],['c',845,338,360,431,443],['r',875,380,410,424,480],
    ['c',905,402,403,575,587],['r',935,495,545,577,665],['r',962,480,503,544,553],['c',992,495,502,614,640],['c',1022,606,617,648,678],
    ['r',1052,565,575,658,675],['c',1082,538,575,610,650],['c',1112,565,616,692,715],['c',1142,660,690,692,750],['r',1172,660,677,691,722],
    ['c',1202,663,667,725,770],['r',1229,620,622,727,730],['r',1259,570,620,680,700],['r',1289,518,520,565,600],['r',1319,472,510,522,550],
    ['c',1349,485,512,594,612],['r',1379,540,594,596,640],['r',1409,535,565,596,600],['c',1439,562,565,605,606],['c',1469,606,613,665,720],
    ['r',1496,590,607,665,680]
  ], 440, 130, 3);
  series([
    ['r',85,585,600,607,640],['r',115,535,545,602,637],['c',145,492,544,564,570],['r',175,532,548,566,632],['c',205,535,547,572,600],
    ['r',235,480,502,575,584],['r',265,434,480,502,520],['r',292,440,447,480,505],['c',322,447,450,594,600],['c',352,562,592,646,658],
    ['r',382,522,538,640,660],['r',412,505,517,539,580],['r',442,445,454,517,517],['r',472,368,392,440,488],['c',502,354,372,392,420],
    ['c',532,358,390,470,470],['r',559,460,469,511,570],['r',589,437,452,469,488],['r',619,420,445,448,470],['c',649,430,450,452,480],
    ['r',679,426,446,453,470],['r',709,370,379,446,447],['r',739,360,364,379,404],['r',769,323,325,367,368],['r',799,272,361,368,380],
    ['c',826,356,357,370,372],['r',856,316,319,370,435],['r',886,266,270,320,350],['c',916,258,259,284,318],['r',946,270,280,292,325],
    ['r',976,217,232,280,282],['c',1006,228,231,245,280],['c',1036,226,245,262,302],['r',1066,226,257,272,320],['c',1096,208,255,290,335],
    ['c',1124,282,292,350,372],['r',1154,310,328,350,414],['c',1184,327,370,476,522]
  ], 920, 130, 3);

  /* indicator guide lines */
  line(44, 622.5, 1311, 622.5, '#ff0000', 1.2, { 'stroke-dasharray': '3 3' });
  line(44, 720.5, 1311, 720.5, '#ffff00', 1.2, { 'stroke-dasharray': '3 3' });
  line(44, 818.5, 1311, 818.5, '#00ff00', 1.2, { 'stroke-dasharray': '3 3' });

  /* spikes */
  function spike(x0, x1, px, py, c) {
    el('polyline', { points: x0 + ',842.5 ' + px + ',' + py + ' ' + x1 + ',842.5', fill: 'none', stroke: c, 'stroke-width': 1.2 });
  }
  spike(78, 99, 88, 794, '#a03030');
  spike(99, 119, 108, 745, '#ff0000');
  spike(692, 712, 701, 745, '#ff0000');
  spike(702, 721, 711, 794, '#a03030');
  spike(979, 998, 988, 794, '#a03030');
  spike(1146, 1166, 1156, 745, '#ff0000');
  line(840.5, 826, 840.5, 843, '#1a1aff', 1.5);
  line(846.5, 838, 846.5, 843, '#1a1aff', 1.2);
  line(46, 842.5, 1310, 842.5, '#e01010', 1.4);
  line(46, 842.5, 1310, 842.5, '#1a1aff', 1.4, { 'stroke-dasharray': '5 14' });

  /* indicator polylines, coloured segment by segment */
  var COL = { b: '#0a0aff', g: '#00ee00', y: '#ffff00', r: '#ff0000', m: '#ff00ff' };
  var WID = { b: 2, g: 1, y: 2, r: 2.4, m: 1.1 };
  var Z9 = function (x, y) { return [40 + x / 2.24, 560 + y / 3]; };
  var Z10 = function (x, y) { return [700 + x / 2.178, 560 + y / 3]; };
  function trace(parts) {
    var prev = null, col = null;
    parts.forEach(function (p) {
      p[1].split(' ').forEach(function (tok) {
        var m = tok.match(/^([a-z]?)(-?[\d.]+),(-?[\d.]+)$/);
        if (m[1]) col = m[1];
        var pt = p[0](+m[2], +m[3]);
        if (prev) line(prev[0], prev[1], pt[0], pt[1], COL[col], WID[col], { 'stroke-linecap': 'round' });
        prev = pt;
      });
    });
  }
  trace([[Z9, 'b20,570 38,582 62,582 m88,565 r110,540 150,470 175,432 197,412 m220,408 262,393 285,382 r310,350 330,333 352,327 375,300 395,260 418,235 440,205 462,170 483,142 505,135 m530,137 b552,147 575,160 597,162 m620,153 660,148 705,137 727,138 752,133 775,133 798,135 b818,150 840,162 862,170 m905,157 925,160 b950,180 975,195 995,210 1040,214 m1060,215 1085,228 b1105,247 1128,248 m1150,225 r1172,195 1195,193 m1215,182 1238,186 1260,186 b1282,225 1305,285 1328,330 1350,390 1372,445 1393,505 1415,520 m1438,520 1458,495 r1480,470'],
    [Z10, '25,430 45,405 68,393 m90,405 b112,435 133,447 155,480 175,513 217,540 240,570 262,592 285,605 306,625 328,627 m350,610 r370,585 390,560 412,560 m437,567 478,565 b500,597 520,607 542,608 m563,597 r585,585 608,572 628,572 650,552 670,535 690,505 m712,518 b735,555 758,572 m778,572 800,552 r822,515 843,490 m865,487 b885,497 930,497 955,499 m972,490 r993,425 1015,330 1037,250 1058,215 1100,190 1122,162 1145,148 1188,128 m1210,128 1230,132 b1255,140 1275,170 1295,200 1317,227 1338,292']]);
  trace([[Z9, 'b20,548 42,565 g65,540 y108,435 130,350 150,292 175,240 197,220 g218,230 240,215 y262,190 285,170 305,143 g325,145 b352,157 g372,130 y396,121 g418,138 440,123 462,120 483,115 505,135 b530,167 552,177 577,198 g597,192 620,168 640,163 662,170 683,158 y705,145 g727,165 752,148 775,155 b798,160 818,205 840,228 860,240 g883,200 y905,182 g925,220 b950,275 975,305 995,350 g1017,322 1038,335 1060,325 1085,370 b1105,418 y1128,372 1150,260 1172,200 g1195,247 1215,200 1238,232 1260,217 1282,325 b1305,425 1328,460 1350,560 1372,640 1393,690 g1415,655 y1438,638 1458,565 1482,530'],
    [Z10, '25,468 68,433 g90,495 b112,527 133,527 155,585 175,637 g197,628 217,663 b240,730 262,765 285,780 306,800 g328,760 y350,690 370,635 390,528 g412,528 b437,530 g457,512 478,530 b500,592 g520,585 y542,573 563,522 585,505 608,483 628,477 650,385 670,300 690,212 g712,310 b735,430 g758,385 y778,345 800,250 822,190 843,170 g865,230 b885,268 908,282 930,282 955,292 972,289 g993,225 y1015,180 1037,142 g1058,185 b1080,222 g1100,210 y1122,162 g1145,155 y1188,138 g1210,145 b1230,165 1255,163 1275,205 1295,270 1317,290 1338,458']]);

  /* hand-drawn annotations */
  var GR = '#00e600', YE = '#ffff00', RD = '#ff0000', BL = '#0000ee';
  line(660.5, 735, 660.5, 780, GR, 1.6);
  line(660.5, 402, 660.5, 735, GR, 3.2);
  el('polygon', { fill: GR, points: '660.5,392 666,403 660.5,399 655,403' });
  line(836.7, 398, 836.7, 817, GR, 1.8);
  line(1257, 223, 1257, 265, GR, 1.6);
  line(1257, 265, 1257, 560, GR, 3.4);
  line(1257, 560, 1257, 607, GR, 1.8);
  arrow(1193, 204, 1247, 577, GR, 3, 13, 6);
  arrow(1209, 163, 1257, 196, GR, 3, 13, 6);
  arrow(589, 146, 1058, 499, GR, 3, 14, 7);
  arrow(592, 151, 660, 382, GR, 3.6, 15, 7);
  arrow(667, 372, 718, 248, GR, 3, 14, 7);
  arrow(718, 248, 840, 387, GR, 3, 14, 7);
  arrow(843, 387, 882, 290, GR, 3, 14, 7);
  arrow(883, 290, 954, 378, GR, 3, 14, 7);
  arrow(953, 353, 1028, 279, GR, 3, 13, 6);
  arrow(1276, 216, 1335, 310, GR, 3, 14, 7);
  el('polygon', { fill: BL, points: '653,390 662,387 680,387 680,386 720,386 720,385.5 840,385.5 840,386 875,386 875,387 903,390 875,393 840,394.5 720,395 680,394 662,393' });
  arrow(490, 417, 1362, 183, YE, 3, 14, 7);
  arrow(488, 414, 595, 151, YE, 3.4, 15, 7);
  arrow(1020, 280, 1048, 354, RD, 3.2, 14, 7);
  arrow(1048, 353, 1086, 254, RD, 3.2, 14, 7);
  arrow(1090, 254, 1107, 326, RD, 3.2, 14, 7);
  arrow(1107, 324, 1275, 206, RD, 3.2, 14, 7);
  el('ellipse', { cx: 856.5, cy: 346.5, rx: 9.5, ry: 10, fill: RD });
  el('ellipse', { cx: 943, cy: 360.5, rx: 18, ry: 9, fill: RD });
  arrow(662, 790, 875, 844, '#1515f5', 3.2, 13, 6);

  /* high marker */
  line(598, 159, 611, 164, '#ddd', 1);
  /* low marker below the data window */
  line(62, 549, 78, 543, '#ddd', 1);
  /* close button of the indicator pane */
  el('rect', { x: 1319.5, y: 574.5, width: 18, height: 18, fill: 'none', stroke: '#555' });
  line(1324, 579, 1333, 588, '#888', 1);
  line(1333, 579, 1324, 588, '#888', 1);
  /* scroll buttons of the time axis */
  [45, 1393].forEach(function (x0) {
    el('rect', { x: x0 + .5, y: 849.5, width: 17, height: 16, fill: '#111', stroke: '#555' });
    var d = x0 === 45 ? -1 : 1, cx = x0 + 9;
    [-2, 3].forEach(function (o) {
      el('polyline', { points: (cx + o - d * 3) + ',853 ' + (cx + o + d * 1) + ',857.5 ' + (cx + o - d * 3) + ',862', fill: 'none', stroke: '#aaa' });
    });
  });
})();
```
